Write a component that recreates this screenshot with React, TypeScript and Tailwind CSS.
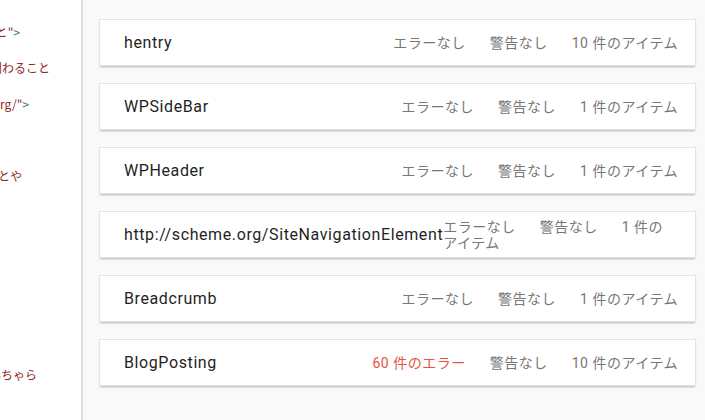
import React from "react";

type Fila = {
  nombre: string;
  errores: number;
  items: number;
};

const filas: Fila[] = [
  { nombre: "hentry", errores: 0, items: 10 },
  { nombre: "WPSideBar", errores: 0, items: 1 },
  { nombre: "WPHeader", errores: 0, items: 1 },
  { nombre: "http://scheme.org/SiteNavigationElement", errores: 0, items: 1 },
  { nombre: "Breadcrumb", errores: 0, items: 1 },
  { nombre: "BlogPosting", errores: 60, items: 10 },
];

// trozos de código que asoman por el panel izquierdo
const lineas = [
  { texto: "内容と", cierre: "\">", ancho: "w-[20px]", mt: "mt-[14px]" },
  { texto: "すべてに関わること", cierre: "", ancho: "w-[50px]", mt: "" },
  { texto: "https://example.org/", cierre: "\">", ancho: "w-[29px]", mt: "" },
  { texto: "このページのことや", cierre: "", ancho: "w-[22px]", mt: "mt-[36px]" },
  { texto: "なんちゃら", cierre: "", ancho: "w-[37px]", mt: "mt-[163px]" },
];

function Tarjeta({ fila }: { fila: Fila }) {
  return (
    <div className="flex h-[47px] items-center justify-between border border-[#e3e3e3] bg-white pl-[24px] pr-[17px] shadow-[0_2px_2px_-1px_rgba(0,0,0,0.28)]">
      <span className="whitespace-nowrap text-[16px] tracking-[0.6px] text-[#1f1f1f]">
        {fila.nombre}
      </span>
      <div className="min-w-0 text-[14px] leading-4 tracking-[0.5px] text-[#777] [word-break:keep-all]">
        {fila.errores > 0 ? (
          <span className="text-[#e5533f]">{fila.errores} 件のエラー</span>
        ) : (
          <span>エラーなし</span>
        )}
        <span className="ml-[24px]">警告なし</span>
        <span className="ml-[24px]">
          {fila.items} 件の<wbr />アイテム
        </span>
      </div>
    </div>
  );
}

export default function App() {
  return (
    <div className="flex h-[420px] w-[705px] font-['Roboto','Noto_Sans_CJK_JP',sans-serif]">
      <aside className="flex w-[83px] flex-none flex-col overflow-hidden border-r-2 border-[#dedede] bg-white font-['Noto_Sans_CJK_JP',sans-serif] text-[12px] text-[#8f2a1f]">
        {lineas.map((l, i) => (
          <div key={i} className={`${l.ancho} ${l.mt} flex h-[36px] flex-none items-center justify-end whitespace-nowrap`}>
            {l.texto}
            {l.cierre && (
              <>
                <span>"</span>
                <span className="text-[#2f7a63]">&gt;</span>
              </>
            )}
          </div>
        ))}
      </aside>
      <main className="flex flex-1 flex-col gap-[17px] bg-[#f9f9f9] pl-[16px] pr-[9px] pt-[19px]">
        {filas.map((f) => (
          <Tarjeta key={f.nombre} fila={f} />
        ))}
      </main>
    </div>
  );
}
